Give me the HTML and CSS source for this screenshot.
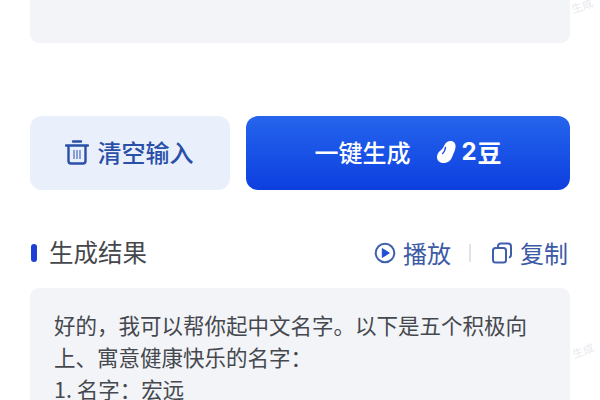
FILE: index.html
```html
<!DOCTYPE html>
<html lang="zh-CN">
<head>
<meta charset="utf-8">
<title>生成结果</title>
<link rel="stylesheet" href="styles.css">
</head>
<body>
<main class="page">
  <div class="input-panel"></div>
  <div class="actions">
    <button class="btn btn-clear" type="button">
      <svg class="icon-trash" viewBox="0 0 24 26" aria-hidden="true">
        <path d="M8 2.500h8M1 6.500h22M3.500 6.500V22a2.500 2.500 0 0 0 2.500 2.500h12a2.500 2.500 0 0 0 2.500-2.500V6.500" fill="none" stroke="#2a4fa8" stroke-width="2.400" stroke-linecap="round" stroke-linejoin="round"/>
        <path d="M9 11v9M12 11v9M15 11v9" fill="none" stroke="#5f7cc0" stroke-width="1.400"/>
      </svg>
      <span>清空输入</span>
    </button>
    <button class="btn btn-generate" type="button">
      <span>一键生成</span>
      <span class="cost">
        <svg class="icon-bean" viewBox="0 0 20 24" aria-hidden="true">
          <path d="M14.500 1C18 1 20 3.500 19.500 7.500 19 11 17.500 13 16.500 16 15 20.500 12 23 7.500 23 3.500 23 1 20.500 1 17 1 14 2.500 12 4.500 10.500 6.500 9 7.500 7 8.500 5 9.800 2.500 12 1 14.500 1z" fill="#fff"/>
          <path d="M9.500 7.500c-.3 2.500-1.300 4.500-2.800 6" fill="none" stroke="#1d52e6" stroke-width="1.500" stroke-linecap="round"/>
        </svg>
        <b class="cost-num">2</b><span class="cost-unit">豆</span>
      </span>
    </button>
  </div>
  <header class="result-head">
    <h2 class="result-title">生成结果</h2>
    <div class="tools">
      <span class="tool">
        <svg class="icon-tool" viewBox="0 0 22 22" aria-hidden="true">
          <circle cx="11" cy="11" r="9.300" fill="none" stroke="#3f5fae" stroke-width="2"/>
          <path d="M8.300 6.600l7 4.400-7 4.400z" fill="#1f4fd8" stroke="#1f4fd8" stroke-width="1" stroke-linejoin="round"/>
        </svg>
        <span>播放</span>
      </span>
      <i class="divider"></i>
      <span class="tool">
        <svg class="icon-tool" viewBox="0 0 22 22" aria-hidden="true">
          <path d="M7 5V4a2.500 2.500 0 0 1 2.500-2.500H17A3 3 0 0 1 20 4.500V13a2.500 2.500 0 0 1-2 2.400" fill="none" stroke="#3f5fae" stroke-width="2"/>
          <rect x="2" y="6" width="13" height="14.500" rx="2.500" fill="none" stroke="#3f5fae" stroke-width="2"/>
        </svg>
        <span>复制</span>
      </span>
    </div>
  </header>
  <section class="result-panel">
    <p class="result-line">好的，我可以帮你起中文名字。以下是五个积极向<br>上、寓意健康快乐的名字：</p>
    <p class="result-line">1. 名字：宏远</p>
  </section>
  <span class="watermark wm-top">生成</span>
  <span class="watermark wm-side">生成</span>
</main>
</body>
</html>
```
FILE: styles.css
```css
* { box-sizing: border-box; }
html, body {
  margin: 0;
  height: 400px;
  overflow: hidden;
  background: #fff;
}
body {
  font-family: "Noto Sans CJK SC", "Noto Sans", sans-serif;
}
.page {
  position: relative;
  width: 600px;
  height: 400px;
  padding: 0 30px;
  overflow: hidden;
}
.input-panel {
  height: 43px;
  background: #f3f4f8;
  border-radius: 0 0 9px 9px;
}
.actions {
  display: flex;
  gap: 16px;
  margin-top: 73px;
  height: 74px;
}
.btn {
  display: flex;
  align-items: center;
  justify-content: center;
  border: 0;
  border-radius: 12px;
  font-family: inherit;
  font-size: 24px;
  line-height: 1;
  padding: 0 0 3px;
}
.btn-clear {
  width: 200px;
  gap: 9px;
  padding-right: 2px;
  background: #e9f0fb;
  color: #2a4fa8;
  font-weight: 500;
}
.icon-trash { width: 24px; height: 26px; }
.btn-generate {
  width: 324px;
  gap: 26px;
  background: linear-gradient(180deg, #2565ec 0%, #0d3fe0 100%);
  color: #fff;
  font-weight: 500;
}
.cost { display: flex; align-items: center; }
.icon-bean { width: 20px; height: 24px; margin-right: 5px; }
.cost-num { font-family: "Inter", sans-serif; font-weight: 700; font-size: 24px; margin-right: 1px; }
.cost-unit { font-weight: 700; }
.result-head {
  display: flex;
  align-items: center;
  justify-content: space-between;
  height: 36px;
  margin-top: 45px;
  padding-right: 2px;
}
.result-title {
  position: relative;
  margin: 0;
  padding-left: 19px;
  font-size: 24.500px;
  line-height: 34px;
  height: 36px;
  font-weight: 400;
  color: #45474d;
}
.result-title::before {
  content: "";
  position: absolute;
  left: 1px;
  top: 9px;
  width: 6px;
  height: 18px;
  border-radius: 3px;
  background: #1c3fd6;
}
.tools { display: flex; align-items: center; }
.tool {
  display: flex;
  align-items: center;
  gap: 7px;
  font-size: 24px;
  line-height: 34px;
  color: #3c5aa6;
}
.icon-tool { width: 22px; height: 22px; }
.divider {
  width: 2px;
  height: 18px;
  margin: 0 20px 0 18px;
  background: #dfe3ea;
}
.result-panel {
  height: 130px;
  margin-top: 17px;
  padding: 21px 24px 0;
  background: #f3f4f8;
  border-radius: 9px 9px 0 0;
}
.result-line {
  margin: 0;
  font-size: 21.500px;
  line-height: 32px;
  color: #45484e;
}
.watermark {
  position: absolute;
  font-size: 11px;
  line-height: 1;
  color: #e9eaee;
  transform: rotate(-20deg);
}
.wm-top { left: 571px; top: 0; }
.wm-side { left: 572px; top: 345px; }
```
